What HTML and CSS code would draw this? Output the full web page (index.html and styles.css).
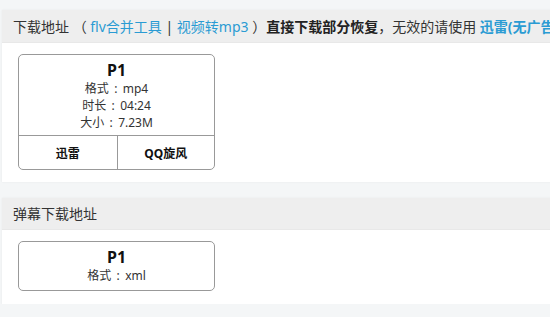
FILE: index.html
```html
<!DOCTYPE html>
<html lang="zh">
<head>
<meta charset="utf-8">
<link rel="stylesheet" href="styles.css">
</head>
<body>
<div class="page">
  <section class="panel">
    <div class="panel-head">下载地址 （ <a class="lnk">flv合并工具</a> | <a class="lnk">视频转mp3</a> ）<b>直接下载部分恢复</b><span class="cm">，</span>无效的请使用 <a class="lnk strong">迅雷(无广告版)</a></div>
    <div class="panel-body">
      <div class="card">
        <div class="card-info">
          <div class="card-title">P1</div>
          <div class="card-line">格式<span class="c">:</span>mp4</div>
          <div class="card-line">时长<span class="c">:</span>04:24</div>
          <div class="card-line">大小<span class="c">:</span>7.23M</div>
        </div>
        <div class="card-actions">
          <a class="act">迅雷</a>
          <a class="act">QQ旋风</a>
        </div>
      </div>
    </div>
  </section>
  <section class="panel panel-2">
    <div class="panel-head">弹幕下载地址</div>
    <div class="panel-body body-2">
      <div class="card">
        <div class="card-info info-2">
          <div class="card-title">P1</div>
          <div class="card-line">格式<span class="c">:</span>xml</div>
        </div>
      </div>
    </div>
  </section>
</div>
</body>
</html>
```
FILE: styles.css
```css
html, body {
  margin: 0;
  padding: 0;
  background: #f4f6f7;
  font-family: "Noto Sans", "Noto Sans CJK SC", sans-serif;
  color: #333;
  overflow: hidden;
}
.page {
  padding: 10px 0 0 2px;
  width: 548px;
  overflow: hidden;
}
.panel {
  background: #fff;
  box-shadow: 0 0 2px rgba(0,0,0,0.06);
  width: 640px;
}
.panel-2 {
  margin-top: 16px;
}
.panel-head {
  height: 33px;
  line-height: 33px;
  background: #eeeeee;
  padding-left: 11px;
  font-size: 14px;
  white-space: nowrap;
  overflow: hidden;
  border-bottom: 1px solid #e8e8e8;
  box-sizing: border-box;
}
.panel-2 .panel-head {
  height: 32px;
  line-height: 32px;
}
.cm {
  display: inline-block;
  width: 14px;
  text-align: center;
}
.panel-head b {
  font-weight: bold;
  color: #222;
}
.lnk {
  color: #2a9bd3;
  text-decoration: none;
}
.lnk.strong {
  font-weight: bold;
}
.panel-body {
  padding: 11px 0 12px 16px;
}
.body-2 {
  padding: 11px 0 13px 16px;
}
.card {
  width: 197px;
  border: 1px solid #999;
  border-radius: 5px;
  box-sizing: border-box;
  background: #fff;
}
.card-info {
  text-align: center;
  padding: 5px 0 4px;
}
.info-2 {
  padding: 5px 0 6px;
}
.card-title {
  font-size: 16px;
  font-weight: bold;
  line-height: 20px;
  height: 20px;
  color: #111;
}
.card-line {
  font-size: 12px;
  line-height: 17px;
  height: 17px;
  color: #333;
  white-space: nowrap;
}
.c {
  display: inline-block;
  width: 14px;
  text-align: center;
}
.card-actions {
  display: grid;
  grid-template-columns: 1fr 1fr;
  border-top: 1px solid #999;
  height: 33px;
}
.act {
  display: flex;
  align-items: center;
  justify-content: center;
  font-size: 12px;
  font-weight: bold;
  color: #111;
}
.act + .act {
  border-left: 1px solid #999;
}
```
